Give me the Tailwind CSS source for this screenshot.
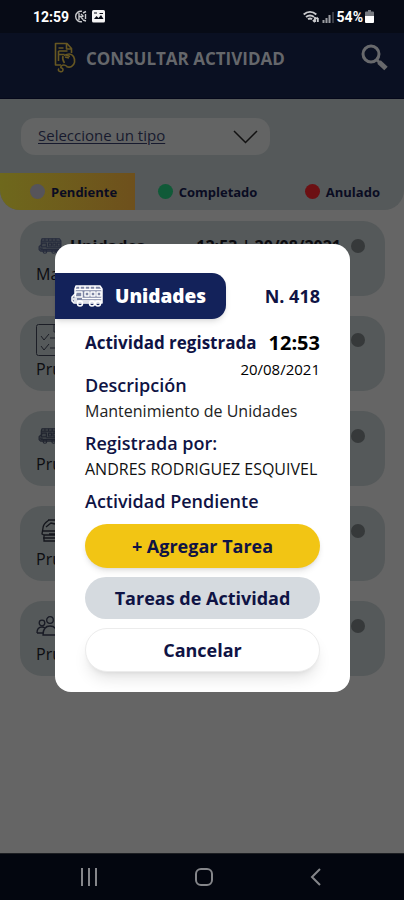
<!DOCTYPE html>
<html lang="es">
<head>
<meta charset="utf-8">
<meta name="viewport" content="width=device-width, initial-scale=1">
<title>Consultar actividad</title>
<script src="https://cdn.jsdelivr.net/npm/@tailwindcss/browser@4"></script>
</head>
<body class="relative flex min-h-screen flex-col bg-[#656565] font-['Open_Sans','Noto_Sans',sans-serif] text-[#0a0c22]">
<svg class="hidden" aria-hidden="true">
  <symbol id="bus" viewBox="0 0 32 22">
    <g fill="none" stroke="currentColor" stroke-width="1.500" stroke-linejoin="round">
      <path d="M5 1h24l2 3v14H3l-2-2v-4l3-3V4z" fill="currentColor" fill-opacity=".45"/>
      <path d="M4 4.500h27M9 1v3M14 1v3M19 1v3M24 1v3"/>
      <path d="M5 7h6v5H4zM14 7h4v4h-4zM20 7h4v4h-4zM26 7h4v4h-4zM11 13.500h20M2 14h4M3 16h28"/>
      <circle cx="9" cy="18.500" r="2.500"/><circle cx="21" cy="18.500" r="2.500"/><circle cx="27" cy="18.500" r="2.500"/>
    </g>
  </symbol>
</svg>

<div class="flex h-[33px] items-center justify-between bg-[#070b16] pr-[30px] pl-[33px] text-white">
  <div class="flex items-center gap-[5px]">
    <span class="font-[Roboto] text-sm leading-4 font-bold">12:59</span>
    <svg class="size-[13px]" viewBox="0 0 13 13" fill="none" stroke="#c9cacd" stroke-width="1.400"><path d="M8 1.300A5.300 5.300 0 1 0 8 11.700M9 3l3-1.500M9 10l3 1M5 3v7M5 6.500h2M7 4l2 2-2 1 2 2.500M11.500 4v5"/></svg>
    <svg class="size-[13px]" viewBox="0 0 13 13"><rect width="13" height="12.500" rx="1.500" fill="#f4f4f4"/><path d="M2 9l2.500-3L6.500 8 9 5l2.500 4z" fill="#070b16"/><path d="M2 3h3M7.500 3.500H11" stroke="#070b16"/></svg>
  </div>
  <div class="flex items-center gap-[3px]">
    <svg class="h-3 w-4" viewBox="0 0 16 12" fill="none" stroke="#c9cacd" stroke-width="1.900"><path d="M.7 3.500C4.500.2 9.500.2 13.300 3.500M3 6c2.500-2 5.500-2 8 0M5 8.300c1.400-1 2.800-1 4 0M12 6v5M10 9l2 2.200M14.800 11V7M13.400 8l1.400-1.500"/></svg>
    <svg class="h-3 w-3" viewBox="0 0 12 12"><path d="M1.500 12V9M4.500 12V7M7.500 12V4" stroke="#9a9ca1" stroke-width="2"/><path d="M11 1v11" stroke="#4a4d55" stroke-width="1.500"/></svg>
    <span class="flex items-center gap-[2px] font-[Roboto] text-sm leading-4 font-bold">54%
      <svg class="h-[13px] w-[9px]" viewBox="0 0 9 13"><path d="M3 0h3v1.500h2q1 0 1 1V6H0V2.500q0-1 1-1h2z" fill="#777a80"/><path d="M0 6h9v6q0 1-1 1H1q-1 0-1-1z" fill="#fff"/></svg>
    </span>
  </div>
</div>

<header class="flex h-[66px] items-start border-b border-[#05081a] bg-[#0a1022] pt-[9px] pr-4 pl-[54px]">
  <svg class="mr-[10px] h-[31px] w-[22px]" viewBox="0 0 22 31" fill="none" stroke="#675722" stroke-width="1.600" stroke-linejoin="round"><path d="M7 23H1.500V1.500H13l4.500 5V11M12.500 2v5h5M4.500 9h9M4.500 6h5M4.500 12.500h6M4.500 9v10"/><path d="M10 13.500c2-1 7-3 9.500 1 2 3.500 1.500 8-2 10-1.500.8-4 .5-5 0M9 14c-1 3 0 5 1.500 7M11 15l4 1M12 13l4 1.500"/><path d="M13 24.500c-2-2-5-2-6 0s2 1 2 3-1 2.500-3 2-2-2-1-3"/></svg>
  <h1 class="flex-1 pt-[5px] text-[17px] leading-6 font-bold text-[#65676b]">CONSULTAR ACTIVIDAD</h1>
  <button type="button" aria-label="Buscar" class="mt-[2px]">
    <svg class="size-[27px]" viewBox="0 0 27 27" fill="none" stroke="#68696c"><circle cx="10" cy="10" r="8" stroke-width="3"/><path d="M15.500 15.500l3 3" stroke-width="3"/><path d="M18 18l7 6.500" stroke-width="5"/></svg>
  </button>
</header>

<section class="overflow-hidden rounded-b-[20px] bg-[#55595a] pt-[19px]">
  <div class="relative mr-[134px] ml-[21px]">
    <select aria-label="Tipo" class="h-[37px] w-full appearance-none rounded-[14px] bg-[#636464] pr-10 pb-[3px] pl-[17px] text-[15px] leading-7 text-[#171a2e] underline underline-offset-2"><option>Seleccione un tipo</option></select>
    <svg class="pointer-events-none absolute top-3 right-3 h-[14px] w-[25px]" viewBox="0 0 25 14" fill="none" stroke="#111" stroke-width="1.500"><path d="M1 1l11.500 11.500L24 1"/></svg>
  </div>
  <div class="mt-[18px] flex h-[37px] text-[13px] leading-4 font-bold">
    <button type="button" class="flex w-1/3 items-center gap-[6px] bg-linear-to-r from-[#6e681c] to-[#6e501c] pl-[30px]"><span class="size-[15px] rounded-full bg-[#56545a]"></span>Pendiente</button>
    <button type="button" class="flex w-1/3 items-center gap-[6px] pl-[23px]"><span class="size-[15px] rounded-full bg-[#105a38]"></span>Completado</button>
    <button type="button" class="flex w-1/3 items-center justify-end gap-[6px] pr-6"><span class="size-[15px] rounded-full bg-[#6c1013]"></span>Anulado</button>
  </div>
</section>

<main class="flex flex-1 flex-col gap-5 pt-[11px] pr-[19px] pl-5 text-[#0c0c10]">
  <article class="h-[75px] rounded-[22px] bg-[#55595a] pt-3 pr-5 pl-4">
    <div class="flex h-[26px] items-center">
      <svg class="mr-2 ml-[2px] h-4 w-6 text-[#262b3c]"><use href="#bus"/></svg>
      <h2 class="flex-1 text-base leading-6 font-bold">Unidades</h2>
      <span class="mr-[10px] text-base leading-6 font-bold">12:53 | 20/08/2021</span>
      <span class="size-[14px] rounded-full bg-[#36393a]"></span>
    </div>
    <p class="mt-[3px] text-base leading-6">Mantenimiento</p>
  </article>
  <article class="h-[75px] rounded-[22px] bg-[#55595a] pt-[7px] pr-5 pl-4">
    <div class="flex h-[34px] items-center justify-between">
      <svg class="size-8 text-[#1c1e26]" viewBox="0 0 32 32" fill="none" stroke="currentColor"><rect x=".5" y=".5" width="27" height="31" rx="2"/><path d="M5 12l3 4 5-6M5 22l3 4 5-6M14 14h8M14 24h8M18 1v7h9"/></svg>
      <span class="size-[14px] rounded-full bg-[#36393a]"></span>
    </div>
    <p class="text-base leading-6">Prueba</p>
  </article>
  <article class="h-[75px] rounded-[22px] bg-[#55595a] pt-3 pr-5 pl-4">
    <div class="flex h-[26px] items-center justify-between">
      <svg class="ml-[2px] h-4 w-6 text-[#20242f]"><use href="#bus"/></svg>
      <span class="size-[14px] rounded-full bg-[#36393a]"></span>
    </div>
    <p class="mt-[3px] text-base leading-6">Prueba</p>
  </article>
  <article class="h-[75px] rounded-[22px] bg-[#55595a] pt-3 pr-5 pl-4">
    <div class="flex h-[26px] items-center justify-between">
      <svg class="ml-[5px] size-6 text-[#14161c]" viewBox="0 0 24 24" fill="none" stroke="currentColor" stroke-width="1.300"><path d="M2 9c0-4 3-6 6-8M7 1h8l2 4M5 8l5-4 4 1M2 12h20M2 9l-1 6 2 1h17M2 19h20M3 16v6h17M8 15h6"/></svg>
      <span class="size-[14px] rounded-full bg-[#36393a]"></span>
    </div>
    <p class="mt-[3px] text-base leading-6">Prueba</p>
  </article>
  <article class="h-[75px] rounded-[22px] bg-[#55595a] pt-3 pr-5 pl-4">
    <div class="flex h-[26px] items-center justify-between">
      <svg class="h-5 w-6 text-[#181a24]" viewBox="0 0 24 20" fill="none" stroke="currentColor" stroke-width="1.300"><circle cx="6" cy="7" r="2.800"/><circle cx="14" cy="4" r="3.300"/><path d="M1 17c0-4 2-6 5-6 1 0 2 .3 3 1M1 17h6M7 19c0-6 3-9 7-9s7 3 7 9zM19 3c3 0 4 4 1 5"/></svg>
      <span class="size-[14px] rounded-full bg-[#36393a]"></span>
    </div>
    <p class="mt-[3px] text-base leading-6">Prueba</p>
  </article>
</main>

<nav class="flex h-[47px] items-center justify-between border-t border-[#1c1e22] bg-[#03060f] pr-[83px] pl-[80px] text-[#85868a]">
  <button type="button" aria-label="Recientes"><svg class="size-[18px]" viewBox="0 0 18 18" stroke="currentColor" stroke-width="2"><path d="M2 0v18M9 0v18M16 0v18"/></svg></button>
  <button type="button" aria-label="Inicio"><svg class="size-[18px]" viewBox="0 0 18 18" fill="none" stroke="currentColor" stroke-width="2"><rect x="1" y="1" width="16" height="16" rx="5"/></svg></button>
  <button type="button" aria-label="Atrás"><svg class="h-[18px] w-[11px]" viewBox="0 0 11 18" fill="none" stroke="currentColor" stroke-width="2"><path d="M10 1L2 9l8 8"/></svg></button>
</nav>

<div class="absolute inset-0 px-[54px] pt-[244px]">
  <div role="dialog" aria-modal="true" aria-labelledby="titulo" class="ml-px rounded-2xl bg-white pt-[29px] pb-5 text-[#0f1344]">
    <div class="flex items-center justify-between pr-[30px]">
      <div class="flex h-[46px] w-[171px] items-center rounded-r-[14px] bg-[#13225a] pl-4 text-white shadow-md">
        <svg class="mr-3 h-[22px] w-8"><use href="#bus"/></svg>
        <h2 id="titulo" class="text-[19px] leading-6 font-extrabold">Unidades</h2>
      </div>
      <span class="text-lg leading-6 font-bold">N. 418</span>
    </div>
    <div class="px-[30px] pt-[10px]">
      <div class="flex items-center justify-between whitespace-nowrap">
        <h3 class="text-[17px] leading-6 font-bold">Actividad registrada</h3>
        <strong class="text-xl leading-7 text-black">12:53</strong>
      </div>
      <div class="flex h-10 justify-between">
        <h3 class="self-end text-lg leading-6 font-semibold">Descripción</h3>
        <span class="text-[15px] leading-6 text-black">20/08/2021</span>
      </div>
      <p class="mt-[2px] text-base leading-6 whitespace-nowrap text-[#222]">Mantenimiento de Unidades</p>
      <h3 class="mt-2 text-lg leading-6 font-semibold">Registrada por:</h3>
      <p class="mt-[2px] text-base leading-6 whitespace-nowrap text-[#111]">ANDRES RODRIGUEZ ESQUIVEL</p>
      <h3 class="mt-2 text-lg leading-6 font-semibold">Actividad Pendiente</h3>
      <div class="mt-[11px] flex flex-col gap-[9px] text-lg leading-6 font-bold">
        <button type="button" class="h-11 rounded-full bg-[#f2c514] shadow-md">+ Agregar Tarea</button>
        <button type="button" class="h-[42px] rounded-full bg-[#d5dadf]">Tareas de Actividad</button>
        <button type="button" class="h-11 rounded-full border border-[#ececec] bg-white shadow-lg">Cancelar</button>
      </div>
    </div>
  </div>
</div>
</body>
</html>
